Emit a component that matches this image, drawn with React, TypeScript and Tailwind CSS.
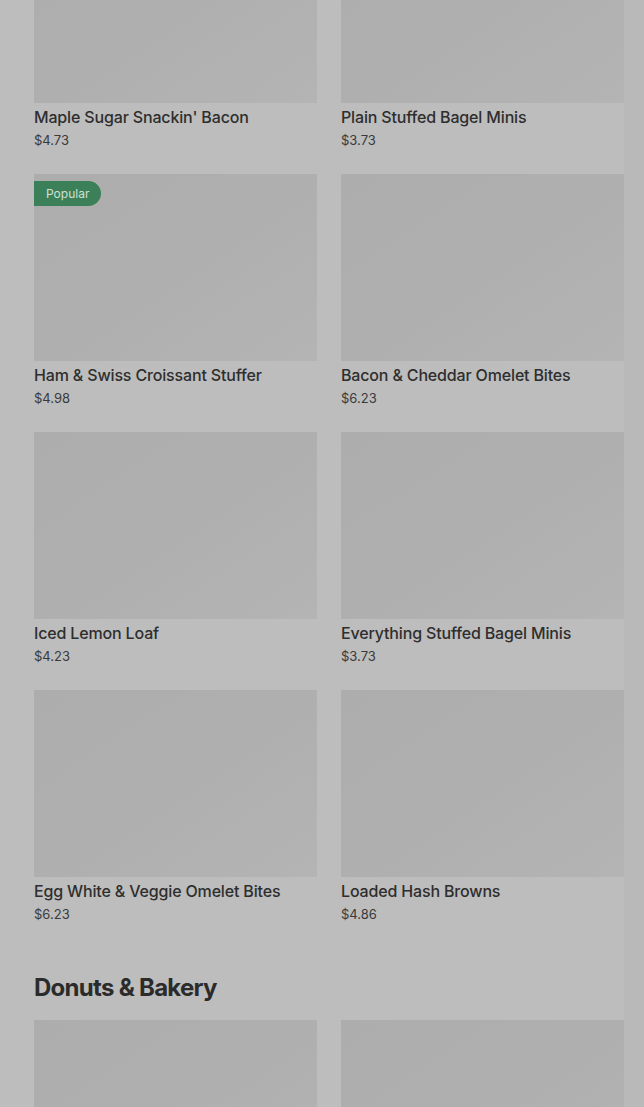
import React from "react";

type Item = {
  name: string;
  price: string;
  popular?: boolean;
};

const items: Item[] = [
  { name: "Maple Sugar Snackin' Bacon", price: "$4.73" },
  { name: "Plain Stuffed Bagel Minis", price: "$3.73" },
  { name: "Ham & Swiss Croissant Stuffer", price: "$4.98", popular: true },
  { name: "Bacon & Cheddar Omelet Bites", price: "$6.23" },
  { name: "Iced Lemon Loaf", price: "$4.23" },
  { name: "Everything Stuffed Bagel Minis", price: "$3.73" },
  { name: "Egg White & Veggie Omelet Bites", price: "$6.23" },
  { name: "Loaded Hash Browns", price: "$4.86" },
];

const ItemCard: React.FC<{ item: Item }> = ({ item }) => (
  <div className="flex flex-col">
    <div className="relative h-[187px] bg-gradient-to-br from-[#adadad] via-[#afafaf] to-[#b4b4b4]">
      {item.popular && (
        <span className="absolute left-0 top-[7px] flex h-[25px] items-center rounded-r-full bg-[#3b8059] pl-3 pr-3 text-[12px] text-[#cfe0d4]">
          Popular
        </span>
      )}
    </div>
    <div className="mt-[2px] text-[16px] font-medium leading-6 tracking-[-0.01em] text-[#2e2e2e]">
      {item.name}
    </div>
    <div className="mt-[1px] text-[13px] leading-5 text-[#3a3a3a]">{item.price}</div>
  </div>
);

export default function App() {
  return (
    <div
      className="h-[1107px] overflow-hidden bg-[#b9b9b9]"
      style={{ fontFamily: "Inter, Roboto, sans-serif" }}
    >
      <div className="flow-root mr-[20px] h-full bg-[#bdbdbd] pl-[34px]">
        <div className="-mt-[84px] grid grid-cols-2 gap-x-6 gap-y-[24px]">
          {items.map((item) => (
            <ItemCard key={item.name} item={item} />
          ))}
        </div>
        <h2 className="mt-[48px] text-[24px] font-bold leading-8 tracking-[-0.03em] text-[#2b2b2b]">
          Donuts &amp; Bakery
        </h2>
        <div className="mt-[16px] grid grid-cols-2 gap-x-6">
          <div className="h-[187px] bg-gradient-to-br from-[#adadad] via-[#afafaf] to-[#b4b4b4]" />
          <div className="h-[187px] bg-gradient-to-br from-[#adadad] via-[#afafaf] to-[#b4b4b4]" />
        </div>
      </div>
    </div>
  );
}
